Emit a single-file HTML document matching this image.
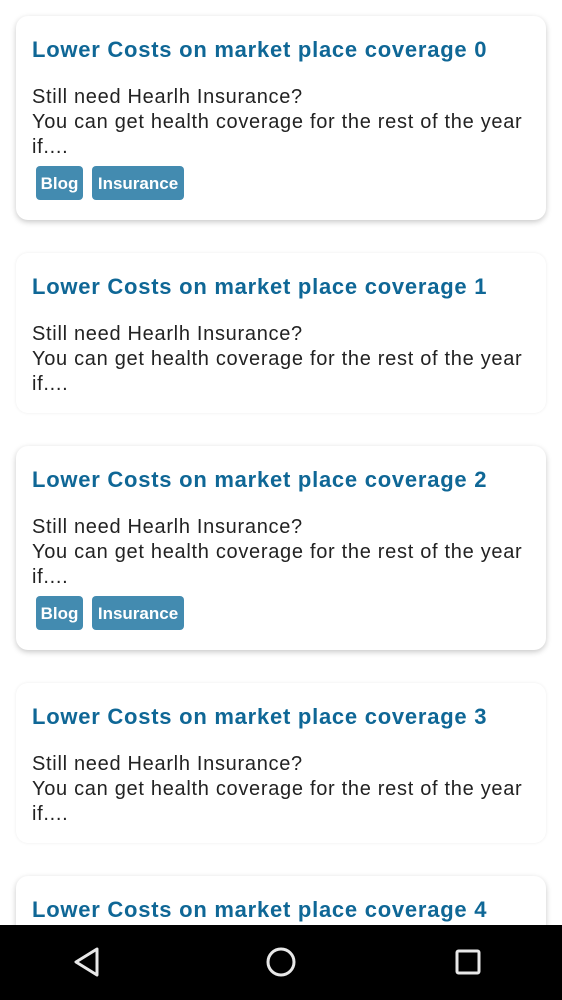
<!DOCTYPE html>
<html><head><style>
*{margin:0;padding:0;box-sizing:border-box}
html,body{width:562px;height:1000px;overflow:hidden}
body{background:#fff;font-family:"Liberation Sans",Arial,sans-serif;position:relative}
.card{position:absolute;left:16px;width:530px;background:#fff;border-radius:12px}
.sh{box-shadow:0 2px 6px rgba(0,0,0,.22)}
.fl{box-shadow:0 0 3px rgba(0,0,0,.08)}
.t{position:absolute;left:16px;top:21px;font-size:22px;font-weight:bold;color:#0f6796;white-space:nowrap;letter-spacing:0.75px}
.b{position:absolute;left:16px;top:69px;font-size:20px;line-height:25px;color:#222;white-space:nowrap;letter-spacing:0.7px}
.tag{position:absolute;top:150px;height:34px;background:#438bb0;color:#fff;font-weight:bold;font-size:17px;line-height:35px;border-radius:4px;text-align:center}
.nav{position:absolute;left:0;top:925px;width:562px;height:75px;background:#000}
</style></head><body>
<div class="card sh" style="top:16px;height:204px">
<div class="t">Lower Costs on market place coverage 0</div>
<div class="b">Still need Hearlh Insurance?<br>You can get health coverage for the rest of the year<br>if....</div>
<div class="tag" style="left:20px;width:47px">Blog</div><div class="tag" style="left:76px;width:92px">Insurance</div>
</div>
<div class="card fl" style="top:253px;height:160px">
<div class="t">Lower Costs on market place coverage 1</div>
<div class="b">Still need Hearlh Insurance?<br>You can get health coverage for the rest of the year<br>if....</div>
</div>
<div class="card sh" style="top:446px;height:204px">
<div class="t">Lower Costs on market place coverage 2</div>
<div class="b">Still need Hearlh Insurance?<br>You can get health coverage for the rest of the year<br>if....</div>
<div class="tag" style="left:20px;width:47px">Blog</div><div class="tag" style="left:76px;width:92px">Insurance</div>
</div>
<div class="card fl" style="top:683px;height:160px">
<div class="t">Lower Costs on market place coverage 3</div>
<div class="b">Still need Hearlh Insurance?<br>You can get health coverage for the rest of the year<br>if....</div>
</div>
<div class="card sh" style="top:876px;height:110px">
<div class="t">Lower Costs on market place coverage 4</div>
</div>
<div class="nav">
<svg width="562" height="75" style="position:absolute;left:0;top:0">
<path d="M97 24 L76 37 L97 50 Z" fill="none" stroke="#e8e8e8" stroke-width="3" stroke-linejoin="round"/>
<circle cx="281" cy="37" r="13" fill="none" stroke="#e8e8e8" stroke-width="3"/>
<rect x="457" y="26" width="22" height="22" rx="1.5" fill="none" stroke="#e8e8e8" stroke-width="3"/>
</svg>
</div>
</body></html>
